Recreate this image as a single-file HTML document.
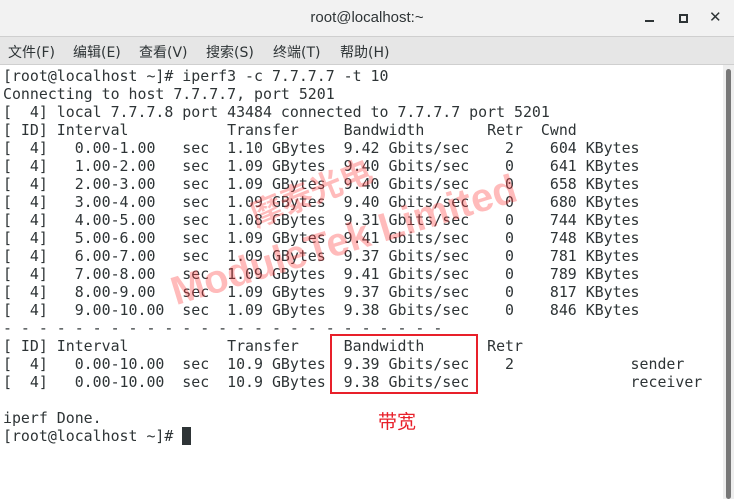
<!DOCTYPE html>
<html><head><meta charset="utf-8"><style>
html,body{margin:0;padding:0;width:734px;height:499px;overflow:hidden;background:#fff;position:relative}
.title{position:absolute;left:0;top:0;width:734px;height:36px;background:#f2f2f2;border-bottom:1px solid #cfcfcf;font:15px "Liberation Sans","DejaVu Sans",sans-serif;color:#2e3436}
.title .t{position:absolute;left:0;width:734px;top:9px;text-align:center}
.menu{position:absolute;left:0;top:37px;width:734px;height:27px;background:#e6e6e6;border-bottom:1px solid #cfcfcf;font:14px "DejaVu Sans","Noto Sans CJK SC",sans-serif;color:#2e3436}
.menu span{position:absolute;top:5px}
pre{position:absolute;left:3px;top:67px;margin:0;font:14.9px/18px "DejaVu Sans Mono","Liberation Mono",monospace;color:#2e3436}
.sb{position:absolute;left:723px;top:65px;width:11px;height:434px;background:#eee}
.sb div{position:absolute;left:3px;top:4px;width:5px;height:430px;background:#777;border-radius:3px}
.wm{position:absolute;color:rgba(255,60,60,0.35);font-family:"Liberation Sans","Noto Sans CJK SC",sans-serif;font-weight:bold;white-space:nowrap;transform-origin:left bottom;line-height:1}
</style></head><body>
<div class="title"><div class="t">root@localhost:~</div>
<div style="position:absolute;left:645px;top:20px;width:9px;height:2px;background:#2e3436"></div>
<div style="position:absolute;left:679px;top:14px;width:5px;height:5px;border:2px solid #2e3436"></div>
<div style="position:absolute;left:709px;top:8px;font:bold 15px 'DejaVu Sans',sans-serif;color:#2e3436">✕</div>
</div>
<div class="menu">
<span style="left:8px">文件(F)</span><span style="left:73px">编辑(E)</span><span style="left:139px">查看(V)</span><span style="left:206px">搜索(S)</span><span style="left:273px">终端(T)</span><span style="left:340px">帮助(H)</span>
</div>
<pre>[root@localhost ~]# iperf3 -c 7.7.7.7 -t 10
Connecting to host 7.7.7.7, port 5201
[  4] local 7.7.7.8 port 43484 connected to 7.7.7.7 port 5201
[ ID] Interval           Transfer     Bandwidth       Retr  Cwnd
[  4]   0.00-1.00   sec  1.10 GBytes  9.42 Gbits/sec    2    604 KBytes
[  4]   1.00-2.00   sec  1.09 GBytes  9.40 Gbits/sec    0    641 KBytes
[  4]   2.00-3.00   sec  1.09 GBytes  9.40 Gbits/sec    0    658 KBytes
[  4]   3.00-4.00   sec  1.09 GBytes  9.40 Gbits/sec    0    680 KBytes
[  4]   4.00-5.00   sec  1.08 GBytes  9.31 Gbits/sec    0    744 KBytes
[  4]   5.00-6.00   sec  1.09 GBytes  9.41 Gbits/sec    0    748 KBytes
[  4]   6.00-7.00   sec  1.09 GBytes  9.37 Gbits/sec    0    781 KBytes
[  4]   7.00-8.00   sec  1.09 GBytes  9.41 Gbits/sec    0    789 KBytes
[  4]   8.00-9.00   sec  1.09 GBytes  9.37 Gbits/sec    0    817 KBytes
[  4]   9.00-10.00  sec  1.09 GBytes  9.38 Gbits/sec    0    846 KBytes
- - - - - - - - - - - - - - - - - - - - - - - - -
[ ID] Interval           Transfer     Bandwidth       Retr
[  4]   0.00-10.00  sec  10.9 GBytes  9.39 Gbits/sec    2             sender
[  4]   0.00-10.00  sec  10.9 GBytes  9.38 Gbits/sec                  receiver

iperf Done.
[root@localhost ~]# <span style="background:#2e3436"> </span></pre>
<div style="position:absolute;left:330px;top:334px;width:144px;height:56px;border:2px solid #e8202a"></div>
<div style="position:absolute;left:378px;top:407px;font:19px 'Noto Sans CJK SC',sans-serif;color:#e8202a">带宽</div>
<div class="wm" style="left:258px;top:200px;font-size:32px;transform:rotate(-22deg)">摩泰光电</div>
<div class="wm" style="left:178px;top:272px;font-size:40px;transform:rotate(-17deg)">ModuleTek Limited</div>
<div class="sb"><div></div></div>
</body></html>
